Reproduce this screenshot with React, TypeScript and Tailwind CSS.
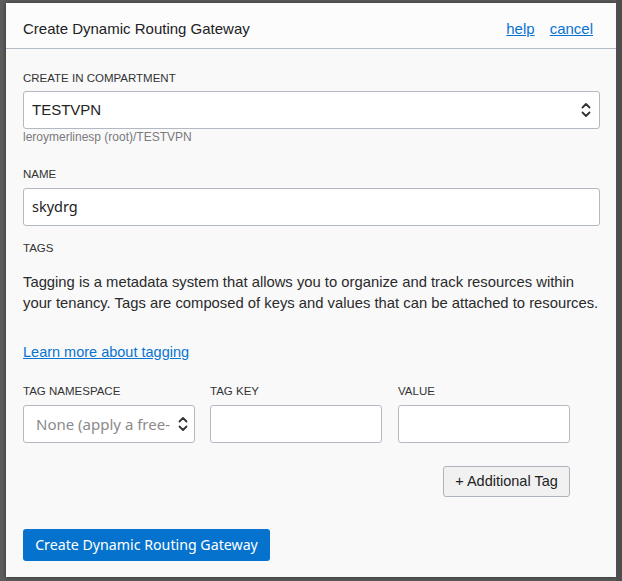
import React from "react";

function UpDown({ className = "" }: { className?: string }) {
  return (
    <svg width="10" height="16" viewBox="0 0 10 16" className={className} fill="none" stroke="#333" strokeWidth="1.8" strokeLinecap="round" strokeLinejoin="round">
      <path d="M1.5 5.5 L5 2 L8.5 5.5" />
      <path d="M1.5 10.5 L5 14 L8.5 10.5" />
    </svg>
  );
}

function Label({ children, className = "" }: { children: React.ReactNode; className?: string }) {
  return <div className={"text-[11.5px] leading-[14px] text-[#333] uppercase " + className}>{children}</div>;
}

export default function App() {
  return (
    <div className="w-[622px] h-[581px] bg-[#5a5a5a] flex overflow-hidden" style={{ fontFamily: '"Liberation Sans", Arial, sans-serif' }}>
      <div className="w-[6px] shrink-0 bg-[#5d5d5d]" />
      <div className="flex flex-col">
        <div className="h-[3px] bg-[#5d5d5d]" />
        <div className="w-[610px] h-[574px] bg-[#f9f9fa] flex flex-col shadow-[0_0_4px_rgba(0,0,0,0.5)]">
          <div className="h-[46px] bg-[#fcfcfd] border-b border-[#b4bcc7] flex items-center justify-between pt-[8px] pl-[17px] pr-[23px] shrink-0">
            <div className="text-[15px] text-[#222]">Create Dynamic Routing Gateway</div>
            <div className="flex gap-[15px] text-[15px] text-[#0a73d0]">
              <span className="underline">help</span>
              <span className="underline">cancel</span>
            </div>
          </div>
          <div className="pl-[17px] pr-[16px] flex flex-col">
            <Label className="mt-[22px]">Create in Compartment</Label>
            <div className="mt-[6px] h-[38px] bg-white border border-[#b3b9c3] rounded-[3px] flex items-center justify-between pl-[8px] pr-[8px]">
              <span className="text-[15px] text-[#222]">TESTVPN</span>
              <UpDown />
            </div>
            <div className="mt-[1px] text-[12px] leading-[14px] text-[#7a7a7a]">leroymerlinesp (root)/TESTVPN</div>
            <Label className="mt-[23px]">Name</Label>
            <div className="mt-[7px] h-[38px] bg-white border border-[#b3b9c3] rounded-[3px] flex items-center pl-[8px]">
              <span className="text-[14.5px] text-[#222]" style={{ fontFamily: '"Noto Sans", sans-serif' }}>skydrg</span>
            </div>
            <Label className="mt-[15px]">Tags</Label>
            <p className="mt-[17px] text-[14.8px] leading-[21px] text-[#2a2a2a]">
              Tagging is a metadata system that allows you to organize and track resources within your tenancy. Tags are composed of keys and values that can be attached to resources.
            </p>
            <div className="mt-[28px] text-[14.5px] leading-[21px] text-[#0a73d0] underline">Learn more about tagging</div>
            <div className="mt-[21px] flex gap-[15px]">
              <div className="w-[172px] flex flex-col">
                <Label>Tag Namespace</Label>
                <div className="mt-[7px] h-[38px] bg-white border border-[#b3b9c3] rounded-[3px] flex items-center justify-between pl-[12px] pr-[6px]">
                  <span className="text-[15px] text-[#8a8a8a] whitespace-nowrap overflow-hidden" style={{ fontFamily: '"Noto Sans", sans-serif' }}>None (apply a free-</span>
                  <UpDown />
                </div>
              </div>
              <div className="w-[172px] flex flex-col">
                <Label>Tag Key</Label>
                <div className="mt-[7px] h-[38px] bg-white border border-[#b3b9c3] rounded-[3px]" />
              </div>
              <div className="w-[172px] flex flex-col ml-[1px]">
                <Label>Value</Label>
                <div className="mt-[7px] h-[38px] bg-white border border-[#b3b9c3] rounded-[3px]" />
              </div>
            </div>
            <div className="mt-[23px] flex w-[547px] justify-end">
              <div className="h-[31px] w-[127px] flex items-center justify-center bg-[#f1f1f2] border border-[#aeb4bd] rounded-[3px] text-[14.5px] text-[#222]">
                + Additional Tag
              </div>
            </div>
            <div className="mt-[32px] flex">
              <div className="h-[32px] w-[247px] flex items-center justify-center bg-[#0572ce] rounded-[3px] text-[14.2px] text-white" style={{ fontFamily: '"Noto Sans", sans-serif' }}>
                Create Dynamic Routing Gateway
              </div>
            </div>
          </div>
        </div>
      </div>
      <div className="w-[6px] shrink-0 bg-[#4e4e4e]" />
    </div>
  );
}
